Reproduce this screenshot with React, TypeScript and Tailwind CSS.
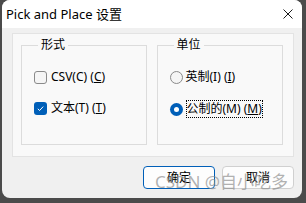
import React from "react";

const font = "font-['Noto_Sans','Noto_Sans_CJK_SC',sans-serif]";

function Check({ checked }: { checked: boolean }) {
  return checked ? (
    <span className="flex h-[13px] w-[13px] items-center justify-center rounded-[3px] bg-[#005fb8]">
      <svg width="9" height="9" viewBox="0 0 9 9">
        <path d="M1.8 4.8 L3.6 6.5 L7.2 2.6" fill="none" stroke="white" strokeWidth="1" />
      </svg>
    </span>
  ) : (
    <span className="h-[13px] w-[13px] rounded-[3px] border border-[#8a8a8a] bg-[#f5f5f5]" />
  );
}

function Radio({ checked }: { checked: boolean }) {
  return checked ? (
    <span className="flex h-[13px] w-[13px] items-center justify-center rounded-full bg-[#005fb8]">
      <span className="h-[5px] w-[5px] rounded-full bg-white" />
    </span>
  ) : (
    <span className="h-[13px] w-[13px] rounded-full border border-[#8a8a8a] bg-[#f5f5f5]" />
  );
}

export default function App() {
  return (
    <div className={`relative h-[203px] w-[306px] overflow-hidden bg-[#4b4b4b] ${font} text-black`}>
      <div className="ml-[2px] flex h-[198px] w-[300px] flex-col overflow-hidden rounded-lg bg-[#f0f0f0]">
        <div className="flex h-[28px] items-center justify-between bg-white pl-[4px] pr-[9px]">
          <span className="text-[13px] leading-none">Pick and Place 设置</span>
          <svg width="10" height="10" viewBox="0 0 10 10">
            <path d="M0.5 0.5 L9.5 9.5 M9.5 0.5 L0.5 9.5" stroke="#1a1a1a" strokeWidth="1" />
          </svg>
        </div>
        <div className="ml-[10px] mr-[8px] mt-[5px] flex gap-[10px] border border-[#e3e3e3] bg-[#f9f9f9] pb-[11px] pl-[8px] pr-[10px] pt-[3px]">
          <fieldset className="h-[108px] w-[126px] border border-[#dcdcdc] pl-[12px]">
            <legend className="ml-[4px] px-[3px] text-[12px] leading-[16px]">形式</legend>
            <div className="mt-[16px] flex flex-col gap-[15px] text-[12px] leading-[16px]">
              <div className="flex items-center gap-[4px]">
                <Check checked={false} />
                <span>
                  CSV(C) (<span className="underline">C</span>)
                </span>
              </div>
              <div className="flex items-center gap-[4px]">
                <Check checked={true} />
                <span>
                  文本(T) (<span className="underline">T</span>)
                </span>
              </div>
            </div>
          </fieldset>
          <fieldset className="h-[108px] w-[127px] border border-[#dcdcdc] pl-[12px]">
            <legend className="ml-[4px] px-[3px] text-[12px] leading-[16px]">单位</legend>
            <div className="mt-[16px] flex flex-col gap-[15px] text-[12px] leading-[16px]">
              <div className="flex items-center gap-[3px]">
                <Radio checked={false} />
                <span>
                  英制(I) (<span className="underline">I</span>)
                </span>
              </div>
              <div className="flex items-center gap-[3px]">
                <Radio checked={true} />
                <span className="border border-dotted border-black">
                  公制的(M) (<span className="underline">M</span>)
                </span>
              </div>
            </div>
          </fieldset>
        </div>
        <div className="mr-[8px] mt-[9px] flex justify-end gap-[7px]">
          <button className="h-[23px] w-[72px] rounded-[4px] border border-[#005fb8] bg-[#fdfdfd] text-[12px] leading-none">
            确定
          </button>
          <button className="h-[23px] w-[72px] rounded-[4px] border border-[#d0d0d0] bg-[#fdfdfd] text-[12px] leading-none">
            取消
          </button>
        </div>
      </div>
      <div className="pointer-events-none absolute left-[155px] top-[170px] whitespace-nowrap text-[17px] leading-[24px] text-[#8f8f8f]/70">
        CSDN @自小吃多
      </div>
    </div>
  );
}
